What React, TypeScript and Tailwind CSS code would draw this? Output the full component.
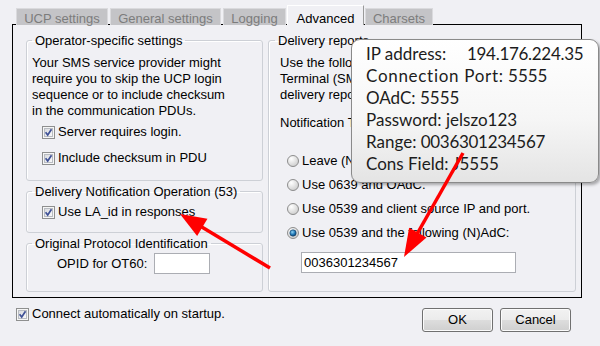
import React from "react";

function CheckBox() {
  return (
    <svg width="13" height="13" viewBox="0 0 13 13" className="shrink-0">
      <defs>
        <linearGradient id="cbfill" x1="0" y1="0" x2="1" y2="1">
          <stop offset="0" stopColor="#d7d9dd" />
          <stop offset="1" stopColor="#fbfbfc" />
        </linearGradient>
      </defs>
      <rect x="0.5" y="0.5" width="12" height="12" fill="#f6f6f6" stroke="#8e8f8f" />
      <rect x="2.5" y="2.5" width="8" height="8" fill="url(#cbfill)" stroke="#b9bcc2" />
      <path d="M3.6 6.3 L5.7 9 L9.5 3.3" fill="none" stroke="#3f5196" strokeWidth="1.7" />
    </svg>
  );
}

function Radio({ on }: { on?: boolean }) {
  return (
    <svg width="12" height="12" viewBox="0 0 12 12" className="shrink-0">
      <defs>
        <radialGradient id="rbg" cx="0.35" cy="0.3" r="0.8">
          <stop offset="0" stopColor="#ffffff" />
          <stop offset="1" stopColor="#c9c9c9" />
        </radialGradient>
        <radialGradient id="rdot" cx="0.4" cy="0.35" r="0.7">
          <stop offset="0" stopColor="#8fd3f5" />
          <stop offset="0.6" stopColor="#1d74b3" />
          <stop offset="1" stopColor="#0b3d6b" />
        </radialGradient>
      </defs>
      <circle cx="6" cy="6" r="5.5" fill="url(#rbg)" stroke="#8d8d8d" />
      {on && <circle cx="6" cy="6" r="3.2" fill="url(#rdot)" stroke="#1a3f63" strokeWidth="0.6" />}
    </svg>
  );
}

function arrow(x1: number, y1: number, x2: number, y2: number, len: number, half: number) {
  const dx = x2 - x1;
  const dy = y2 - y1;
  const d = Math.hypot(dx, dy);
  const ux = dx / d;
  const uy = dy / d;
  const bx = x2 - ux * len;
  const by = y2 - uy * len;
  const px = -uy;
  const py = ux;
  return {
    line: { x1, y1, x2: bx + ux * 3, y2: by + uy * 3 },
    head: `${x2},${y2} ${bx + px * half},${by + py * half} ${bx - px * half},${by - py * half}`,
  };
}

const winButton =
  "w-[71px] h-[24px] rounded-[3px] border border-[#707070] bg-[linear-gradient(#f2f2f2,#ebebeb_50%,#dddddd_51%,#cfcfcf)] shadow-[inset_0_0_0_1px_#fbfbfb] text-[13px] leading-4 text-black";

export default function App() {
  const a1 = arrow(270, 268, 180, 214, 26, 10);
  const a2 = arrow(463, 153, 404, 257, 28, 10);

  return (
    <div className="relative w-[600px] h-[346px] overflow-hidden bg-[#f0f0f4] pt-[5px] font-['Liberation_Sans',Arial,sans-serif] text-[13px] leading-4 text-black">
      {/* tabs */}
      <div className="relative z-10 flex h-[20px] items-end pl-[16px]">
        <div className="h-[17px] w-[92px] border border-b-0 border-[#dadadd] bg-[#c4c4c7] pt-[2px] text-center text-[#7c7c7c]">
          UCP settings
        </div>
        <div className="ml-[2px] h-[17px] w-[111px] border border-b-0 border-[#dadadd] bg-[#c4c4c7] pt-[2px] text-center text-[#7c7c7c]">
          General settings
        </div>
        <div className="ml-[2px] h-[17px] w-[63px] border border-b-0 border-[#dadadd] bg-[#c4c4c7] pt-[2px] text-center text-[#7c7c7c]">
          Logging
        </div>
        <div className="ml-px h-[20px] w-[77px] border-l border-t border-r border-l-white border-t-white border-r-[#9a9a9a] bg-[#f0f0f4] pt-[5px] text-center">
          Advanced
        </div>
        <div className="ml-px h-[17px] w-[68px] border border-b-0 border-[#dadadd] bg-[#c4c4c7] pt-[2px] text-center text-[#7c7c7c]">
          Charsets
        </div>
      </div>

      {/* tab panel */}
      <div className="-mt-px ml-[12px] flex h-[274px] w-[570px] gap-[5px] border border-black pl-[13px] pt-[8px]">
        <div className="flex w-[237px] flex-col">
          <fieldset className="h-[148px] rounded-[3px] border border-[#cdd0d6] shadow-[inset_1px_1px_0_#ffffff]">
            <legend className="ml-[5px] px-[3px] leading-[15px]">Operator-specific settings</legend>
            <div className="pl-[5px] pt-[7px]">
              <p>
                Your SMS service provider might
                <br />
                require you to skip the UCP login
                <br />
                sequence or to include checksum
                <br />
                in the communication PDUs.
              </p>
              <div className="mt-[5px] flex h-4 items-center gap-[3px] pl-[10px]">
                <CheckBox />
                <span>Server requires login.</span>
              </div>
              <div className="mt-[10px] flex h-4 items-center gap-[3px] pl-[10px]">
                <CheckBox />
                <span>Include checksum in PDU</span>
              </div>
            </div>
          </fieldset>

          <fieldset className="mt-[3px] h-[49px] rounded-[3px] border border-[#cdd0d6] shadow-[inset_1px_1px_0_#ffffff]">
            <legend className="ml-[5px] px-[3px] leading-[15px]">Delivery Notification Operation (53)</legend>
            <div className="mt-[5px] flex h-4 items-center gap-[3px] pl-[15px]">
              <CheckBox />
              <span>Use LA_id in responses</span>
            </div>
          </fieldset>

          <fieldset className="mt-[3px] h-[56px] rounded-[3px] border border-[#cdd0d6] shadow-[inset_1px_1px_0_#ffffff]">
            <legend className="ml-[5px] px-[3px] leading-[15px]">Original Protocol Identification</legend>
            <div className="mt-[2px] flex items-center gap-[7px] pl-[30px]">
              <span>OPID for OT60:</span>
              <div className="h-[21px] w-[56px] border border-[#abadb3] bg-white" />
            </div>
          </fieldset>
        </div>

        <fieldset className="h-[259px] w-[308px] rounded-[3px] border border-[#cdd0d6] shadow-[inset_1px_1px_0_#ffffff]">
          <legend className="ml-[6px] px-[3px] leading-[15px]">Delivery reports</legend>
          <div className="overflow-hidden whitespace-nowrap pl-[11px] pt-[7px]">
            <p>
              Use the following settings to tell the Short Message
              <br />
              Terminal (SMSC) how to handle requests for
              <br />
              delivery reports.
            </p>
            <p className="mt-[12px]">Notification Type (NT):</p>
          </div>
          <div className="mt-[22px] flex flex-col gap-[8px] pl-[18px]">
            <div className="flex h-4 items-center gap-[3px]">
              <Radio />
              <span>Leave (NT) unchanged.</span>
            </div>
            <div className="flex h-4 items-center gap-[3px]">
              <Radio />
              <span>Use 0639 and OAdC.</span>
            </div>
            <div className="flex h-4 items-center gap-[3px]">
              <Radio />
              <span>Use 0539 and client source IP and port.</span>
            </div>
            <div className="flex h-4 items-center gap-[3px]">
              <Radio on />
              <span>Use 0539 and the following (N)AdC:</span>
            </div>
          </div>
          <div className="ml-[32px] mt-[11px] flex h-[21px] w-[215px] items-center border border-[#abadb3] bg-white pl-[2px]">
            0036301234567
          </div>
        </fieldset>
      </div>

      {/* bottom row */}
      <div className="flex items-start justify-between pl-[16px] pr-[29px]">
        <div className="mt-[8px] flex h-4 items-center gap-[3px]">
          <CheckBox />
          <span>Connect automatically on startup.</span>
        </div>
        <div className="mt-[10px] flex gap-[7px]">
          <button className={winButton}>OK</button>
          <button className={winButton}>Cancel</button>
        </div>
      </div>

      {/* callout */}
      <div className="absolute left-[351px] top-[39px] z-20 h-[144px] w-[248px] rounded-[9px] border border-[#8a8a8a] bg-[linear-gradient(#ffffff,#f6f6f6_55%,#e4e4e4)] pl-[14px] pt-[3px] font-['Lato',sans-serif] text-[17px] leading-[22px] text-[#1c1c1c] shadow-[2px_2px_3px_rgba(0,0,0,0.3)]">
        <div className="flex">
          <span className="w-[101px]">IP address:</span>
          <span className="tracking-[-0.3px]">194.176.224.35</span>
        </div>
        <div>
          <span className="tracking-[0.7px]">Connection Port:</span> 5555
        </div>
        <div>OAdC: 5555</div>
        <div>Password: jelszo123</div>
        <div>
          Range: <span className="tracking-[-0.3px]">0036301234567</span>
        </div>
        <div>Cons Field: J5555</div>
      </div>

      {/* arrows */}
      <svg className="pointer-events-none absolute left-0 top-0 z-30" width="600" height="346">
        <line {...a1.line} stroke="#ff0000" strokeWidth="3.5" />
        <polygon points={a1.head} fill="#ff0000" />
        <line {...a2.line} stroke="#ff0000" strokeWidth="3.5" />
        <polygon points={a2.head} fill="#ff0000" />
      </svg>
    </div>
  );
}
